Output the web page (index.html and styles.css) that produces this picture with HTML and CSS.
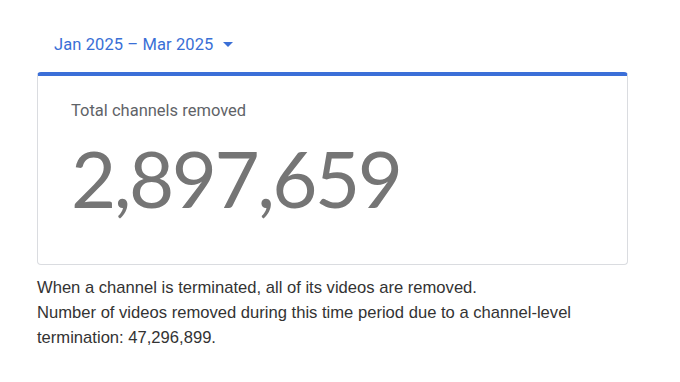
FILE: index.html
```html
<!DOCTYPE html>
<html lang="en">

<head>
    <meta charset="UTF-8">
    <meta name="viewport" content="width=device-width, initial-scale=1.0">
    <title>Channels removed</title>
    <link rel="stylesheet" href="styles.css">
</head>

<body>
    <main class="report">
        <div class="period">
            <span class="period-label">Jan 2025 – Mar 2025</span>
            <span class="caret"></span>
        </div>

        <div class="stat-card">
            <p class="stat-title">Total channels removed</p>
            <p class="stat-value">2,897,659</p>
        </div>

        <p class="note">When a channel is terminated, all of its videos are removed.<br>
            Number of videos removed during this time period due to a channel-level termination: 47,296,899.</p>
    </main>
</body>

</html>
```

FILE: styles.css
```css
/* Reset some default styles */
body,
p {
    margin: 0;
    padding: 0;
}

body {
    background-color: #fff;
    font-family: Roboto, Arial, sans-serif;
}

.report {
    width: 591px;
    padding: 32px 0 0 37px;
}

/* Date range dropdown */
.period {
    display: flex;
    align-items: center;
    gap: 10px;
    padding-left: 17px;
    height: 24px;
    color: #3a6fd6;
    font-size: 16.5px;
    letter-spacing: 0.1px;
}

.caret {
    width: 0;
    height: 0;
    border-left: 5px solid transparent;
    border-right: 5px solid transparent;
    border-top: 5px solid #3a6fd6;
    margin-top: 1px;
}

/* Card */
.stat-card {
    margin-top: 16px;
    height: 188px;
    border: 1px solid #dadce0;
    border-top: 4px solid #3b6fd8;
    border-radius: 4px;
    padding: 0 33px;
}

.stat-title {
    margin-top: 25px;
    font-size: 16.5px;
    color: #5f6368;
}

.stat-value {
    margin-top: 15px;
    font-family: Lato, sans-serif;
    font-size: 78px;
    line-height: 86px;
    letter-spacing: -2.5px;
    color: #757575;
}

.note {
    margin-top: 10px;
    font-family: "Liberation Sans", Arial, sans-serif;
    font-size: 16.6px;
    line-height: 25px;
    color: #333;
}
```
